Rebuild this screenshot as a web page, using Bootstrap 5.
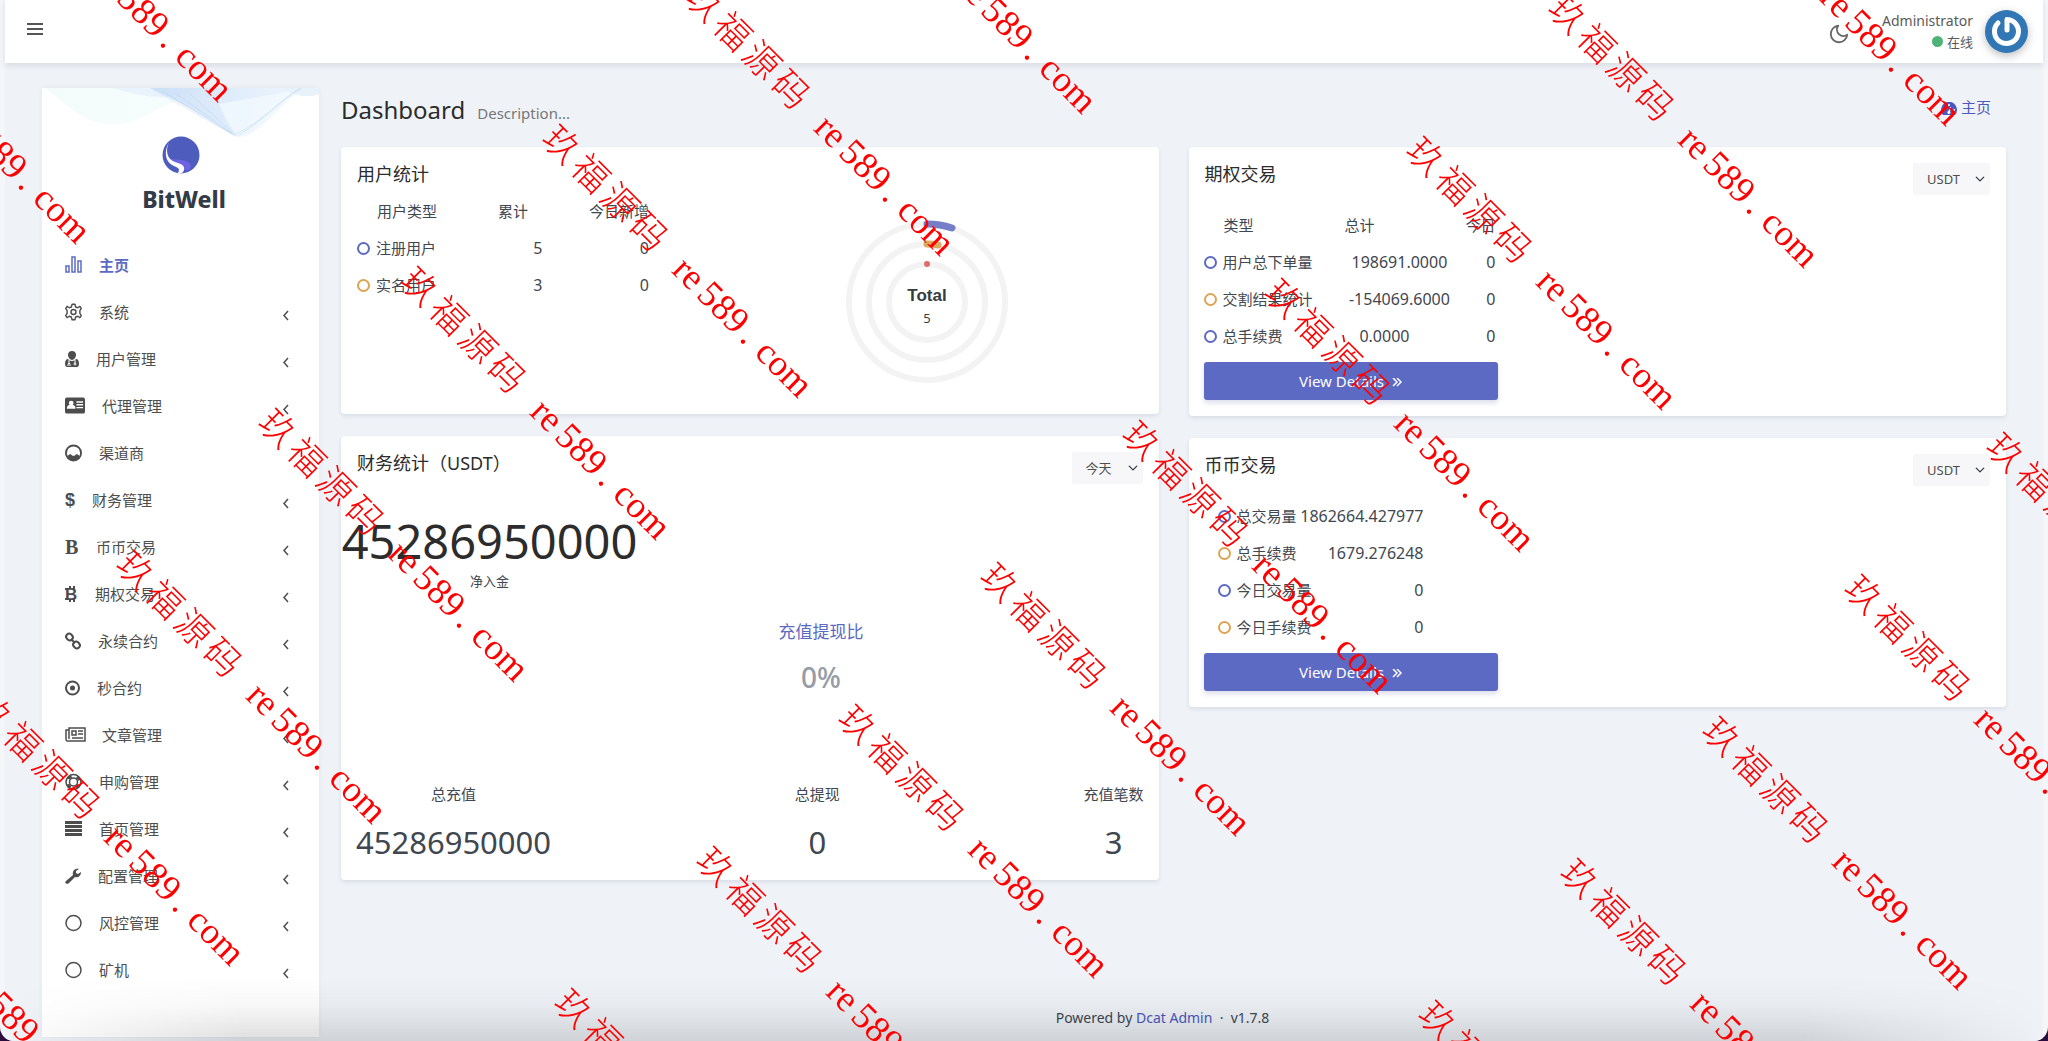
<!DOCTYPE html>
<html lang="zh-CN">
<head>
<meta charset="utf-8">
<meta name="viewport" content="width=device-width, initial-scale=1">
<title>Dashboard</title>
<link href="https://cdn.jsdelivr.net/npm/bootstrap@5.3.0/dist/css/bootstrap.min.css" rel="stylesheet">
<style>
:root{--ink:#414750;--brand:#5c6ac4;--amber:#dda451}
html{background:#2b0d3d}
body{font-family:"Noto Sans","Noto Sans CJK SC",sans-serif;font-size:15px;line-height:23px;color:var(--ink);background:#f4f6f9;border-radius:0 0 14px 14px;overflow-x:hidden;min-height:100vh;padding:0 5px}
a{text-decoration:none;color:#4c58bd}
.shell{background:#eff3f8;min-height:100vh}
.topbar{height:63px;background:#fff;box-shadow:0 2px 6px rgba(40,50,70,.13);padding:0 15px 0 22px;position:relative}
.topbar button{background:none;border:0;padding:0;line-height:0}
.menu-toggle{margin-bottom:6px}
.who{font-size:14px;line-height:21px;color:#5a5a5a;text-align:right}
.who small{font-size:13px}
.dot{width:11px;height:11px;border-radius:50%;background:#4fb276;display:inline-block}
.avatar{margin-left:12px;filter:drop-shadow(0 3px 4px rgba(0,0,0,.25))}
.side{width:277px;margin:25px 0 4px 37px;background:#fff;box-shadow:0 0 5px rgba(40,50,70,.06);flex:none}
.brand{height:154px;position:relative;text-align:center}
.brand .waves{position:absolute;left:0;top:0;width:100%;height:50px}
.brand .mark-logo{display:block;margin:0 auto;position:relative}
.brand-box{padding-top:48px}
.brand strong{display:block;font-size:23px;line-height:30px;margin:10px 0 0 7px;color:#343b48;font-weight:800}
.side .nav-link{height:47px;padding:0 30px 0 23px;color:#4d4d4d;display:flex;align-items:center;font-size:15px}
.side .nav-link svg{overflow:visible}
.side .nav-link svg:first-child{margin-right:17px;margin-bottom:2px}
.side .nav-link .chev{margin-left:auto;margin-top:6px}
.side .nav-link.active{color:var(--brand);font-weight:700}
.page{padding:0 37px 0 22px;min-width:0}
.page-head{height:84px;padding-top:29px}
.page-head h1{font-size:24px;line-height:36px;color:#2c2c2c;font-weight:400;margin:0}
.page-head span{font-size:15px;color:#777;margin-left:12px}
.crumb{margin-top:4px;margin-right:15px}
.board{--bs-gutter-x:30px}
.stack{gap:22px}
.panel{background:#fff;border:0;border-radius:4px;box-shadow:0 2px 4px rgba(40,50,70,.11)}
.panel h2{font-size:18px;line-height:26px;color:#2c2c2c;font-weight:400;margin:0}
.panel-top{padding:14px 16px 0 16px;height:50px}
.form-select.pick{width:auto;height:32px;font-size:13px;line-height:20px;border:0;border-radius:3px;background-color:#f7f7f9;color:#4f4f4f;padding:6px 30px 6px 14px;background-size:10px 10px;background-position:right 5px center;margin-top:2px}
.stats,.stats thead,.stats tbody{display:block}
.stats{width:292px}
.stats tr{display:flex;justify-content:space-between;height:37px;align-items:center}
.stats th,.stats td{padding:0;font-weight:400;white-space:nowrap}
.stats td+td{font-size:16px}
.stats thead th:first-child{padding-left:20px}
.stats .ring-a::before,.stats .ring-b::before{content:"";display:inline-block;width:13px;height:13px;border:2px solid var(--brand);border-radius:50%;margin-right:6px;vertical-align:-1px}
.stats .ring-b::before{border-color:var(--amber)}
.users{height:267px}
.users .stats{margin:-4px 0 0 16px}
.options,.spot{height:269px}
.options .stats{margin:10px 0 0 15px}
.spot .stats{margin:10px 0 0 29px;width:206px}
.btn-view{width:294px;height:38px;margin-left:15px;border-radius:3px;background:var(--brand);color:#fff;font-size:15px;line-height:24px;border:0;box-shadow:0 3px 5px rgba(60,70,150,.18)}
.btn-view:hover{background:#4f5cb5;color:#fff}
.btn-view svg{margin-left:4px}
.options .btn-view,.spot .btn-view{margin-top:7px}
.rings{width:170px;height:170px;margin-left:193px;margin-top:20px}
.finance{height:444px}
.net{width:297px;text-align:center;padding-top:24px;white-space:nowrap}
.net b{display:block;font-weight:400;font-size:47px;line-height:62px;color:#2c2c2c}
.net small{display:block;font-size:13px;line-height:18px}
.share{text-align:center;width:130px;margin:28px 0 0 415px}
.share span{display:block;font-size:17px;line-height:28px;color:var(--brand)}
.share b{display:block;font-size:28px;line-height:38px;margin-top:12px;color:#969ca5;font-weight:500}
.sums{display:flex;justify-content:space-between;padding:87px 15px 0;text-align:center}
.sums b{display:block;font-weight:400;font-size:31px;line-height:44px;margin-top:14px}
.foot{text-align:center;font-size:14px;margin-left:-22px;padding-bottom:12px}
.shade{position:fixed;inset:auto 0 0 0;height:64px;pointer-events:none;background:linear-gradient(to bottom,transparent,rgba(0,0,0,.03) 45%,rgba(0,0,0,.13));-webkit-mask-image:linear-gradient(to right,transparent,#000 12%,#000 88%,transparent);mask-image:linear-gradient(to right,transparent,#000 12%,#000 88%,transparent)}
.stamp{position:fixed;inset:0;width:100%;height:100%;pointer-events:none;fill:red;font-family:"Liberation Serif",serif;font-size:37px;overflow:hidden;z-index:5}
.stamp .han{font-family:"Noto Sans CJK SC",sans-serif;font-weight:300;font-size:36px}
</style>
<script src="https://cdn.jsdelivr.net/npm/bootstrap@5.3.0/dist/js/bootstrap.bundle.min.js"></script>
</head>
<body>
<div class="shell d-flex flex-column">
<header class="topbar d-flex align-items-center justify-content-between">
  <button class="menu-toggle" type="button" aria-label="Menu"><svg width="16" height="14" fill="#555"><rect y="1" width="16" height="2"/><rect y="6" width="16" height="2"/><rect y="11" width="16" height="2"/></svg></button>
  <div class="d-flex align-items-center">
    <button type="button" class="me-4 mt-1" aria-label="Dark mode"><svg width="22" height="22" viewBox="0 0 24 24" fill="none" stroke="#666" stroke-width="2" stroke-linejoin="round"><path d="M21 12.8A9 9 0 1 1 11.2 3 7 7 0 0 0 21 12.8z"/></svg></button>
    <div class="who ms-2">Administrator<br><span class="dot"></span> <small>在线</small></div>
    <svg class="avatar" width="43" height="43" viewBox="0 0 43 43"><circle cx="21.500" cy="21.500" r="21.500" fill="#3277b5"/><path d="M13 13A12 12 0 1 0 22 9.500V20" fill="none" stroke="#fff" stroke-width="5" stroke-linecap="round" stroke-linejoin="round"/></svg>
  </div>
</header>
<div class="d-flex flex-grow-1">
<aside class="side">
  <div class="brand">
    <svg class="waves" viewBox="0 0 277 50" preserveAspectRatio="none">
      <defs><linearGradient id="w1" x1="0" x2="1"><stop offset="0" stop-color="#c6dcf6"/><stop offset="1" stop-color="#edf5fd"/></linearGradient><linearGradient id="w2" x2="1"><stop stop-color="#f3fcfb"/><stop offset="1" stop-color="#f8fdff"/></linearGradient></defs>
      <path d="M2 0C22 12 38 35 67 36S110 22 140 10L277 6V0z" fill="url(#w2)"/>
      <path d="M70 0C92 6 118 14 145 5L170 0z" fill="#e9f3fc"/>
      <path d="M108 0C140 15 172 34 192 48C212 53 228 26 256 4L262 0z" fill="url(#w1)" opacity=".85"/>
      <path d="M177 16C182 27 186 38 197 49C215 50 231 24 256 2L222 8z" fill="#f3f9ff" opacity=".75"/>
      <path d="M240 0C252 9 268 10 277 6V0z" fill="#e8f2fb"/>
      <path d="M112 2L190 46M120 3L192 47M133 5L191 46M147 5L190 44M193 46C218 36 237 14 258 0M197 47C222 32 239 10 260 0" fill="none" stroke="#a9c9ee" stroke-width=".6" opacity=".6"/>
    </svg>
    <div class="brand-box">
      <svg class="mark-logo" width="38" height="38" viewBox="0 0 38 38"><circle cx="19" cy="19" r="18.500" fill="#4e5dbd"/><path d="M6 22c5 2 12 1 18 3 5 2 6 6 3 9l-6 0c-1-6-11-6-15-12z" fill="#6e63e0"/><path d="M7 6C1 17 4 27 12 30c5 2 6 3 4 7 3 1 5 0 6-3 1-5-3-6-9-8C5 23 3 15 7 6z" fill="#fff"/></svg>
      <strong>BitWell</strong>
    </div>
  </div>
  <nav class="nav flex-column" id="sideNav">
    <a class="nav-link active" href="#"><svg width="17" height="18" fill="none" stroke="currentColor" stroke-width="1.500"><rect x="1" y="10" width="3" height="6"/><rect x="7" y="1" width="3" height="15"/><rect x="13" y="5" width="3" height="11"/></svg>主页</a>
    <a class="nav-link" data-more href="#"><svg width="17" height="18" viewBox="0 0 24 24" fill="none" stroke="currentColor" stroke-width="2"><path d="M10 1h4l1 4 3 1 3-2 2 3-2 3v4l2 3-2 3-3-2-3 1-1 4h-4l-1-4-3-1-3 2-2-3 2-3v-4L1 7l2-3 3 2 3-1z" stroke-linejoin="round"/><circle cx="12" cy="12" r="3.500"/></svg>系统</a>
    <a class="nav-link" data-more href="#"><svg width="14" height="18" viewBox="0 0 14 18" fill="currentColor"><path d="M7 1c3 0 4 2 4 4S9 10 7 10 3 7 3 5s1-4 4-4z"/><path d="M3 9c1 1 2 2 4 2s3-1 4-2c2 0 3 2 3 5 0 2-1 3-2 3H2c-1 0-2-1-2-3 0-3 1-5 3-5z"/><path d="M4 10v3M10 10v3M3 16v-2l1-1 1 1v2M9 14a1 1 0 1 0 2 0 1 1 0 1 0-2 0" fill="none" stroke="#fff"/></svg>用户管理</a>
    <a class="nav-link" data-more href="#"><svg width="20" height="17" viewBox="0 0 21 17"><rect width="21" height="17" rx="2" fill="currentColor"/><circle cx="6.500" cy="6" r="2.500" fill="#fff"/><path d="M2 12c0-4 2-4 4.500-4S11 8 11 12zM12 4h7v1.500h-7zM12 7h7v1.500h-7zM12 10h7v1.500h-7z" fill="#fff"/></svg>代理管理</a>
    <a class="nav-link" href="#"><svg width="17" height="18" viewBox="0 0 18 18"><circle cx="9" cy="9" r="8" fill="none" stroke="currentColor" stroke-width="2"/><path d="M3 14c0-3 2-3 4-4h4c2 1 4 1 4 4-3 4-9 4-12 0z" fill="currentColor"/><path d="M5.500 6c0-4 7-4 7 0 0 3-1 6-3.500 6S5.500 9 5.500 6z" fill="#fff"/><path d="M3 13c1-1 2-1 3-2M15 13c-1-1-2-1-3-2" stroke="currentColor" stroke-width="2"/></svg>渠道商</a>
    <a class="nav-link" data-more href="#"><svg width="10" height="20" fill="currentColor"><text x="0" y="16" font-family="Liberation Sans" font-weight="700" font-size="18">$</text></svg>财务管理</a>
    <a class="nav-link" data-more href="#"><svg width="14" height="20" fill="currentColor"><text x="0" y="17" font-family="Liberation Serif" font-weight="700" font-size="20">B</text></svg>币币交易</a>
    <a class="nav-link" data-more href="#"><svg width="13" height="20" fill="currentColor"><text x="0" y="16" font-family="Liberation Sans" font-weight="700" font-size="17">B</text><path d="M0 4h3v2H0zM0 14h3v2H0zM4 2h2v3H4zM8 2h2v3H8zM4 15h2v3H4zM8 15h2v3H8z"/></svg>期权交易</a>
    <a class="nav-link" data-more href="#"><svg width="16" height="18" viewBox="0 0 16 18" fill="none" stroke="currentColor" stroke-width="2"><rect x="1" y="2" width="7" height="6" rx="3" transform="rotate(45 4.500 5)"/><rect x="8" y="10" width="7" height="6" rx="3" transform="rotate(45 11.500 13)"/><path d="M6 7l4 4"/></svg>永续合约</a>
    <a class="nav-link" data-more href="#"><svg width="15" height="18"><circle cx="7.500" cy="9" r="6.500" fill="none" stroke="currentColor" stroke-width="2"/><circle cx="7.500" cy="9" r="2.500" fill="currentColor"/></svg>秒合约</a>
    <a class="nav-link" data-more href="#"><svg width="20" height="17" fill="none" stroke="currentColor" stroke-width="1.500"><path d="M4 2h16v13H2c-1 0-1-1-1-2V4h3zM4 4v9M7 5h4v4H7zM13 5h5M13 8h5M7 12h11"/></svg>文章管理</a>
    <a class="nav-link" data-more href="#"><svg width="17" height="18" fill="none" stroke="currentColor"><circle cx="8.500" cy="9" r="7.500" stroke-width="1.500"/><circle cx="8.500" cy="9" r="4" stroke-width="1.500"/><circle cx="8.500" cy="9" r="6" stroke-width="3" stroke-dasharray="4 5.400" stroke-dashoffset="-2.700"/></svg>申购管理</a>
    <a class="nav-link" data-more href="#"><svg width="17" height="18" fill="currentColor"><path d="M0 1h17v3H0zM0 5h17v3H0zM0 9h17v3H0zM0 13h17v3H0z"/></svg>首页管理</a>
    <a class="nav-link" data-more href="#"><svg width="16" height="18" viewBox="0 0 16 18" fill="currentColor"><path d="M1 14l7-6c-1-4 2-7 6-6l-3 2v2l2 1 3-2c0 4-3 6-6 5l-6 6c-2 2-5 0-3-2z"/></svg>配置管理</a>
    <a class="nav-link" data-more href="#"><svg width="17" height="18" fill="none" stroke="currentColor" stroke-width="1.500"><circle cx="8.500" cy="9" r="7.500"/></svg>风控管理</a>
    <a class="nav-link" data-more href="#"><svg width="17" height="18" fill="none" stroke="currentColor" stroke-width="1.500"><circle cx="8.500" cy="9" r="7.500"/></svg>矿机</a>
  </nav>
</aside>
<main class="page flex-grow-1 d-flex flex-column">
  <div class="page-head d-flex justify-content-between align-items-start">
    <div class="d-flex align-items-baseline"><h1>Dashboard</h1><span>Description...</span></div>
    <a class="crumb" href="#"><svg width="16" height="14" viewBox="0 0 16 14"><path d="M2 13a8 8 0 1 1 12 0z" fill="currentColor"/><g fill="#fff"><circle cx="3" cy="8" r="1"/><circle cx="5" cy="4" r="1"/><circle cx="8" cy="3" r="1"/><circle cx="13" cy="8" r="1"/><path d="M9 5l1 .5-1 4a1.500 1.500 0 1 1-1.500-.5z"/></g></svg> 主页</a>
  </div>
  <div class="row board">
    <div class="col-6 d-flex flex-column stack">
      <section class="card panel users">
        <div class="panel-top"><h2>用户统计</h2></div>
        <div class="d-flex align-items-start">
          <table class="stats">
            <thead><tr><th>用户类型</th><th>累计</th><th>今日新增</th></tr></thead>
            <tbody><tr><td class="ring-a">注册用户</td><td>5</td><td>0</td></tr><tr><td class="ring-b">实名用户</td><td>3</td><td>0</td></tr></tbody>
          </table>
          <svg class="rings" viewBox="-85 -85 170 170" fill="none">
            <g stroke="#f3f3f3" stroke-width="6"><circle r="78"/><circle r="58"/><circle r="38"/></g>
            <g stroke-width="7" stroke-linecap="round"><path d="M0-78A78 78 0 0 1 25-74" stroke="#747ec9"/><path d="M0-58A58 58 0 0 1 11-57" stroke="#dcaa60"/></g>
            <circle cy="-38" r="3" fill="#e06c6c"/>
            <text y="-1" text-anchor="middle" font-family="Liberation Sans" font-weight="700" font-size="17" fill="#373d3f">Total</text>
            <text y="21" text-anchor="middle" font-size="13" fill="#373d3f">5</text>
          </svg>
        </div>
      </section>
      <section class="card panel finance">
        <div class="panel-top d-flex justify-content-between align-items-start"><h2>财务统计（USDT）</h2><select class="form-select pick" aria-label="时间"><option>今天</option></select></div>
        <div class="net"><b>45286950000</b><small>净入金</small></div>
        <div class="share"><span>充值提现比</span><b>0%</b></div>
        <div class="sums"><div>总充值<b>45286950000</b></div><div>总提现<b>0</b></div><div>充值笔数<b>3</b></div></div>
      </section>
    </div>
    <div class="col-6 d-flex flex-column stack">
      <section class="card panel options">
        <div class="panel-top d-flex justify-content-between align-items-start"><h2>期权交易</h2><select class="form-select pick" aria-label="币种"><option>USDT</option></select></div>
        <table class="stats">
          <thead><tr><th>类型</th><th>总计</th><th>今日</th></tr></thead>
          <tbody><tr><td class="ring-a">用户总下单量</td><td>198691.0000</td><td>0</td></tr><tr><td class="ring-b">交割结果统计</td><td>-154069.6000</td><td>0</td></tr><tr><td class="ring-a">总手续费</td><td>0.0000</td><td>0</td></tr></tbody>
        </table>
        <button class="btn btn-view" type="button">View Details <svg width="10" height="9" fill="none" stroke="currentColor" stroke-width="1.500"><path d="M1 0l4 4-4 4M5 0l4 4-4 4"/></svg></button>
      </section>
      <section class="card panel spot">
        <div class="panel-top d-flex justify-content-between align-items-start"><h2>币币交易</h2><select class="form-select pick" aria-label="币种"><option>USDT</option></select></div>
        <table class="stats">
          <tbody><tr><td class="ring-a">总交易量</td><td>1862664.427977</td></tr><tr><td class="ring-b">总手续费</td><td>1679.276248</td></tr><tr><td class="ring-a">今日交易量</td><td>0</td></tr><tr><td class="ring-b">今日手续费</td><td>0</td></tr></tbody>
        </table>
        <button class="btn btn-view" type="button">View Details <svg width="10" height="9" fill="none" stroke="currentColor" stroke-width="1.500"><path d="M1 0l4 4-4 4M5 0l4 4-4 4"/></svg></button>
      </section>
    </div>
  </div>
  <footer class="foot mt-auto">Powered by <a href="#">Dcat Admin</a> &nbsp;·&nbsp; v1.7.8</footer>
</main>
</div>
</div>
<div class="shade"></div>
<svg class="stamp" id="stamp"></svg>
<script>
// Chevron on every entry that has a submenu
document.querySelectorAll('[data-more]').forEach(function (a) {
  a.insertAdjacentHTML('beforeend', '<svg class="chev" width="6" height="11" fill="none" stroke="currentColor" stroke-width="1.500"><path d="M5 1L1 5.500 5 10"/></svg>');
});
// Site stamp repeated on a diagonal lattice over the window
var han = ['玖', '福', '源', '码'].map(function (c, i) { return '<tspan x="' + (41 * i - 18) + '">' + c + '</tspan>'; }).join('');
var out = '';
for (var a = -3; a < 5; a++) for (var b = -9; b < 10; b++) {
  var x = 857 + 438 * a - 142 * b, y = 725 + 438 * a + 142 * b;
  if (x < -250 || y < -250 || x > innerWidth + 10 || y > innerHeight + 10) continue;
  out += '<text transform="translate(' + x + ' ' + y + ') rotate(45)" y="12"><tspan class="han">' + han + '</tspan><tspan x="167">re</tspan><tspan x="202">589</tspan><tspan x="263">.</tspan><tspan x="284">com</tspan></text>';
}
document.getElementById('stamp').innerHTML = out;
</script>
</body>
</html>
